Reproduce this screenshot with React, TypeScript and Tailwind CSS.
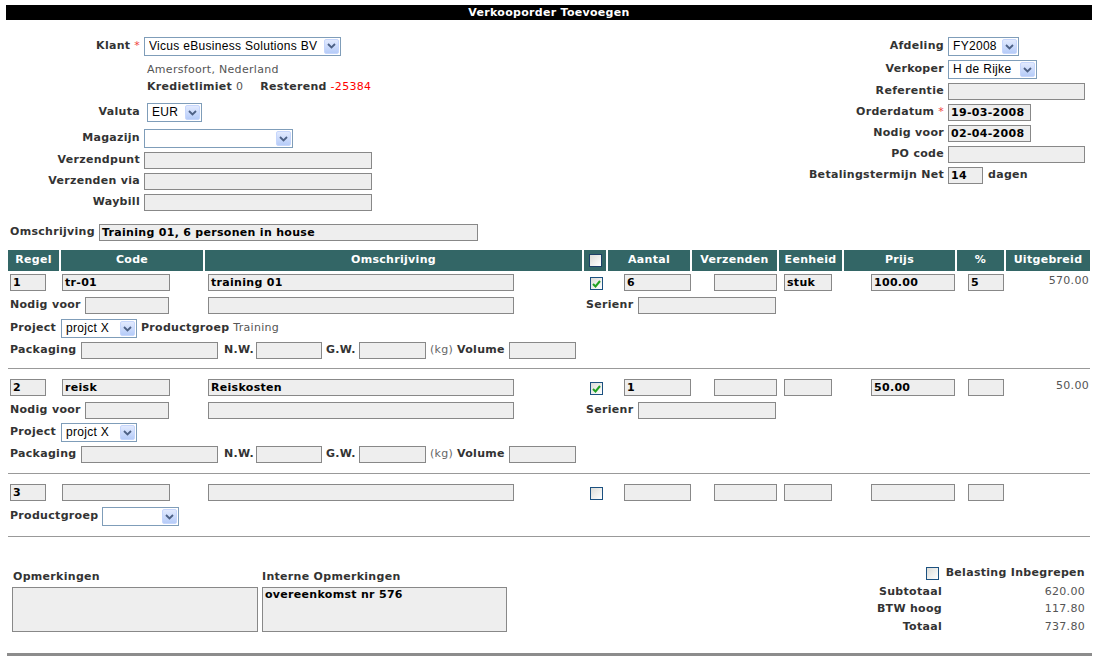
import type { ReactNode } from "react";

function Box({ w, children }: { w: string; children?: ReactNode }) {
  return (
    <div
      className={`h-[17px] shrink-0 overflow-hidden whitespace-nowrap border border-[#888] bg-[#eeeeee] pl-[2px] font-bold leading-[15px] text-black ${w}`}
    >
      {children}
    </div>
  );
}

function Select({ w, value }: { w: string; value?: string }) {
  return (
    <div
      className={`flex h-[19px] shrink-0 items-center border border-[#7f9db9] bg-white pl-[4px] pr-px ${w}`}
    >
      <span className="flex-1 truncate font-['Liberation_Sans',Arial,sans-serif] text-[12px] leading-[15px] text-black">
        {value}
      </span>
      <span className="flex h-[15px] w-[15px] items-center justify-center rounded-[2px] border border-[#c6d6fc] bg-linear-to-b from-[#e2eafe] to-[#b6ccf8]">
        <svg width="9" height="6" viewBox="0 0 9 6">
          <path d="M1 1l3.5 3.5L8 1" stroke="#4d6185" strokeWidth="1.8" fill="none" />
        </svg>
      </span>
    </div>
  );
}

function Check({ checked }: { checked?: boolean }) {
  return (
    <div className="flex h-[13px] w-[13px] shrink-0 items-center justify-center border border-[#1c5180] bg-linear-to-br from-[#dcdcd7] to-white">
      {checked && (
        <svg width="9" height="8" viewBox="0 0 9 8">
          <path d="M1 4l2.5 2.5L8 1" stroke="#21a121" strokeWidth="2" fill="none" />
        </svg>
      )}
    </div>
  );
}

function LeftRow({ label, star, children, gap = "ml-[4px]", h = "h-[17px]", mt }: { label: string; star?: boolean; children: ReactNode; gap?: string; h?: string; mt: string }) {
  return (
    <div className={`flex items-center ${h} ${mt}`}>
      <div className="w-[140px] shrink-0 text-right font-bold">
        {label}
        {star && <span className="font-normal text-[#f03c3c]"> *</span>}
      </div>
      <div className={gap}>{children}</div>
    </div>
  );
}

function RightRow({ label, star, children, h = "h-[17px]", mt }: { label: string; star?: boolean; children: ReactNode; h?: string; mt: string }) {
  return (
    <div className={`flex items-center ${h} ${mt}`}>
      <div className="w-[144px] shrink-0 text-right font-bold">
        {label}
        {star && <span className="font-normal text-[#f03c3c]"> *</span>}
      </div>
      <div className="ml-[4px] flex items-center">{children}</div>
    </div>
  );
}

const heads = [
  { t: "Regel", w: "w-[51px]" },
  { t: "Code", w: "w-[142px]" },
  { t: "Omschrijving", w: "w-[377px]" },
  { t: "", w: "w-[22px]", chk: true },
  { t: "Aantal", w: "w-[82px]" },
  { t: "Verzenden", w: "w-[85px]" },
  { t: "Eenheid", w: "w-[63px]" },
  { t: "Prijs", w: "w-[111px]" },
  { t: "%", w: "w-[47px]" },
  { t: "Uitgebreid", w: "w-[84px]" },
];

function LineMain({ nr, code, desc, checked, qty, unit, price, pct, total, mt }: { nr: string; code?: string; desc?: string; checked?: boolean; qty?: string; unit?: string; price?: string; pct?: string; total?: string; mt: string }) {
  return (
    <div className={`flex h-[17px] items-center ${mt}`}>
      <div className="ml-[10px]"><Box w="w-[36px]">{nr}</Box></div>
      <div className="ml-[16px]"><Box w="w-[108px]">{code}</Box></div>
      <div className="ml-[38px]"><Box w="w-[306px]">{desc}</Box></div>
      <div className="ml-[76px] pt-[2px]"><Check checked={checked} /></div>
      <div className="ml-[21px]"><Box w="w-[67px]">{qty}</Box></div>
      <div className="ml-[23px]"><Box w="w-[63px]" /></div>
      <div className="ml-[7px]"><Box w="w-[48px]">{unit}</Box></div>
      <div className="ml-[39px]"><Box w="w-[84px]">{price}</Box></div>
      <div className="ml-[13px]"><Box w="w-[36px]">{pct}</Box></div>
      <div className="flex-1 self-start pr-[8px] text-right leading-[13px] text-[#555]">{total}</div>
    </div>
  );
}

function NodigRow({ mt }: { mt: string }) {
  return (
    <div className={`flex h-[17px] items-center ${mt}`}>
      <div className="ml-[10px] w-[75px] font-bold">Nodig voor</div>
      <Box w="w-[84px]" />
      <div className="ml-[39px]"><Box w="w-[306px]" /></div>
      <div className="ml-[72px] w-[52px] font-bold">Serienr</div>
      <Box w="w-[138px]" />
    </div>
  );
}

function PackRow({ mt }: { mt: string }) {
  return (
    <div className={`flex h-[17px] items-center ${mt}`}>
      <div className="ml-[10px] w-[71px] font-bold">Packaging</div>
      <Box w="w-[137px]" />
      <div className="ml-[6px] w-[32px] font-bold">N.W.</div>
      <Box w="w-[66px]" />
      <div className="ml-[4px] w-[33px] font-bold">G.W.</div>
      <Box w="w-[67px]" />
      <div className="ml-[4px] w-[27px] text-[#666]">(kg)</div>
      <div className="w-[52px] font-bold">Volume</div>
      <Box w="w-[67px]" />
    </div>
  );
}

function Sep({ mt }: { mt: string }) {
  return <div className={`ml-[8px] h-px w-[1082px] bg-[#999] ${mt}`} />;
}

export default function App() {
  return (
    <div className="h-[657px] w-[1097px] overflow-hidden bg-white font-['DejaVu_Sans',Verdana,sans-serif] text-[11px] tracking-[0.3px] text-[#333]">
      <div className="ml-[6px] mt-[5px] h-[15px] w-[1086px] bg-black text-center font-bold leading-[15px] text-white">
        Verkooporder Toevoegen
      </div>

      <div className="flex">
        {/* left column */}
        <div>
          <LeftRow label="Klant" star mt="mt-[16px]" h="h-[20px]">
            <Select w="w-[197px]" value="Vicus eBusiness Solutions BV" />
          </LeftRow>
          <div className="ml-[147px] mt-[7px] h-[14px] leading-[14px] text-[#555]">Amersfoort, Nederland</div>
          <div className="ml-[147px] mt-[3px] h-[14px] leading-[14px] text-[#555]">
            <span className="font-bold text-[#333]">Kredietlimiet</span> 0
            <span className="ml-[17px] font-bold text-[#333]">Resterend</span>{" "}
            <span className="text-[#f00]">-25384</span>
          </div>
          <LeftRow label="Valuta" gap="ml-[7px]" h="h-[19px]" mt="mt-[9px]">
            <Select w="w-[55px]" value="EUR" />
          </LeftRow>
          <LeftRow label="Magazijn" h="h-[19px]" mt="mt-[7px]">
            <Select w="w-[149px]" />
          </LeftRow>
          <LeftRow label="Verzendpunt" mt="mt-[4px]">
            <Box w="w-[228px]" />
          </LeftRow>
          <LeftRow label="Verzenden via" mt="mt-[4px]">
            <Box w="w-[228px]" />
          </LeftRow>
          <LeftRow label="Waybill" mt="mt-[4px]">
            <Box w="w-[228px]" />
          </LeftRow>
        </div>

        {/* right column */}
        <div className="ml-auto mr-[12px] w-[285px]">
          <RightRow label="Afdeling" h="h-[19px]" mt="mt-[17px]">
            <Select w="w-[71px]" value="FY2008" />
          </RightRow>
          <RightRow label="Verkoper" h="h-[19px]" mt="mt-[4px]">
            <Select w="w-[89px]" value="H de Rijke" />
          </RightRow>
          <RightRow label="Referentie" mt="mt-[4px]">
            <Box w="w-[137px]" />
          </RightRow>
          <RightRow label="Orderdatum" star mt="mt-[4px]">
            <Box w="w-[83px]">19-03-2008</Box>
          </RightRow>
          <RightRow label="Nodig voor" mt="mt-[4px]">
            <Box w="w-[83px]">02-04-2008</Box>
          </RightRow>
          <RightRow label="PO code" mt="mt-[4px]">
            <Box w="w-[137px]" />
          </RightRow>
          <RightRow label="Betalingstermijn Net" mt="mt-[4px]">
            <Box w="w-[35px]">14</Box>
            <span className="ml-[5px] font-bold">dagen</span>
          </RightRow>
        </div>
      </div>

      <div className="mt-[13px] flex h-[17px] items-center">
        <div className="ml-[10px] w-[89px] font-bold">Omschrijving</div>
        <Box w="w-[379px]">Training 01, 6 personen in house</Box>
      </div>

      {/* table header */}
      <div className="ml-[8px] mt-[9px] flex h-[21px] gap-[2px]">
        {heads.map((h, i) => (
          <div
            key={i}
            className={`flex shrink-0 items-center justify-center bg-[#336666] font-bold text-white ${h.w}`}
          >
            {h.chk ? <div className="h-[13px] w-[13px] border border-[#1c3f66] bg-linear-to-br from-[#dcdcd7] to-white" /> : h.t}
          </div>
        ))}
      </div>

      {/* line 1 */}
      <LineMain nr="1" code="tr-01" desc="training 01" checked qty="6" unit="stuk" price="100.00" pct="5" total="570.00" mt="mt-[3px]" />
      <NodigRow mt="mt-[6px]" />
      <div className="mt-[5px] flex h-[19px] items-center">
        <div className="ml-[10px] w-[51px] font-bold">Project</div>
        <Select w="w-[76px]" value="projct X" />
        <span className="ml-[4px] font-bold">Productgroep</span>
        <span className="ml-[4px] text-[#555]">Training</span>
      </div>
      <PackRow mt="mt-[4px]" />
      <Sep mt="mt-[9px]" />

      {/* line 2 */}
      <LineMain nr="2" code="reisk" desc="Reiskosten" checked qty="1" price="50.00" total="50.00" mt="mt-[10px]" />
      <NodigRow mt="mt-[6px]" />
      <div className="mt-[4px] flex h-[19px] items-center">
        <div className="ml-[10px] w-[51px] font-bold">Project</div>
        <Select w="w-[76px]" value="projct X" />
      </div>
      <PackRow mt="mt-[4px]" />
      <Sep mt="mt-[10px]" />

      {/* line 3 */}
      <LineMain nr="3" mt="mt-[10px]" />
      <div className="mt-[6px] flex h-[19px] items-center">
        <div className="ml-[10px] w-[92px] font-bold">Productgroep</div>
        <Select w="w-[77px]" />
      </div>
      <Sep mt="mt-[10px]" />

      {/* remarks + totals */}
      <div className="flex">
        <div className="mt-[33px] flex gap-[4px] pl-[12px]">
          <div>
            <div className="h-[17px] pl-px font-bold leading-[13px]">Opmerkingen</div>
            <div className="h-[45px] w-[246px] border border-[#888] bg-[#eeeeee]" />
          </div>
          <div>
            <div className="h-[17px] font-bold leading-[13px]">Interne Opmerkingen</div>
            <div className="h-[45px] w-[245px] border border-[#888] bg-[#eeeeee] pl-[2px] font-bold leading-[14px] text-black">
              overeenkomst nr 576
            </div>
          </div>
        </div>
        <div className="ml-auto mr-[12px] mt-[29px] w-[240px]">
          <div className="flex h-[14px] items-center justify-end">
            <Check />
            <span className="ml-[7px] font-bold">Belasting Inbegrepen</span>
          </div>
          <div className="mt-[4px] flex h-[17px] items-center">
            <div className="w-[97px] text-right font-bold">Subtotaal</div>
            <div className="flex-1 text-right text-[#555]">620.00</div>
          </div>
          <div className="flex h-[17px] items-center">
            <div className="w-[97px] text-right font-bold">BTW hoog</div>
            <div className="flex-1 text-right text-[#555]">117.80</div>
          </div>
          <div className="flex h-[18px] items-center">
            <div className="w-[97px] text-right font-bold">Totaal</div>
            <div className="flex-1 text-right text-[#555]">737.80</div>
          </div>
        </div>
      </div>

      <div className="ml-[7px] mt-[17px] h-[3px] w-[1085px] bg-[#8c8c8c]" />
    </div>
  );
}
